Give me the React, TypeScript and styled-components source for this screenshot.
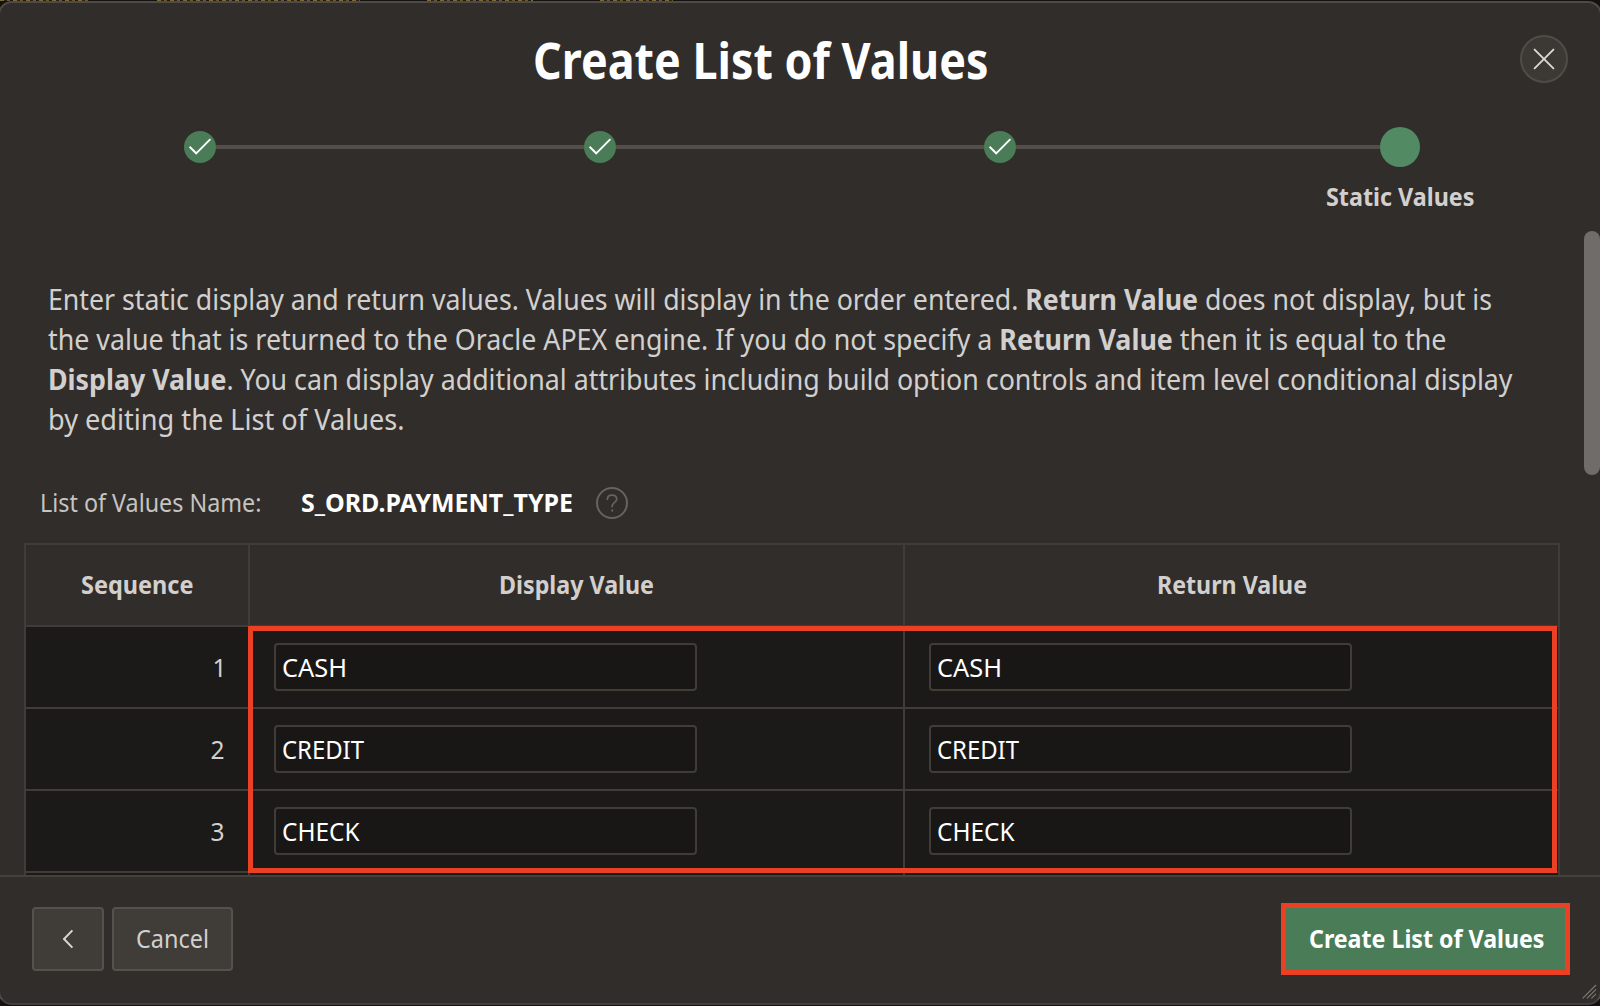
import React, { ReactNode, useLayoutEffect, useRef, useState } from 'react';
import styled, { createGlobalStyle } from 'styled-components';

const color = {
  backdrop: '#14110f',
  surface: '#312d2a',
  surfaceBorder: '#4e4a47',
  line: '#403c39',
  row: '#1b1a18',
  input: '#191715',
  inputBorder: '#403d37',
  button: '#403c38',
  buttonBorder: '#55514d',
  text: '#d2d0ce',
  bright: '#ffffff',
  green: '#4a7d57',
  greenActive: '#528b63',
  red: '#ec4025',
};

const GlobalStyle = createGlobalStyle`
  *, *::before, *::after { box-sizing: border-box; }
  body {
    margin: 0;
    overflow: hidden;
    background: ${color.backdrop};
    font-family: "Noto Sans", "Open Sans", sans-serif;
    color: ${color.text};
  }
`;

const Screen = styled.div`
  position: relative;
  display: flex;
  width: 1600px;
  height: 1006px;
  padding: 1px 0;
  overflow: hidden;
`;

/* Lower edge of the page headings that peek out above the dialog */
const Peek = styled.div`
  position: absolute;
  top: 0;
  left: 0;
  display: flex;
  height: 1px;
`;

const PeekWord = styled.i<{ $gap: number; $width: number }>`
  width: ${p => p.$width}px;
  margin-left: ${p => p.$gap}px;
  background: repeating-linear-gradient(90deg, #7d6a33 0 4px, #2a2216 4px 7px, #6b5a2c 7px 10px, #1c1712 10px 13px);
`;

const Dialog = styled.section`
  display: flex;
  flex-direction: column;
  flex: none;
  width: 1604px;
  height: 1004px;
  margin-left: -2px;
  border: 2px solid ${color.surfaceBorder};
  border-bottom-color: #423e3b;
  border-radius: 14px;
  background: ${color.surface};
  overflow: hidden;
`;

const Header = styled.header`
  display: flex;
  align-items: flex-start;
  justify-content: space-between;
  flex: none;
  height: 120px;
  padding: 26px 32px 0 532.5px;
`;

const Title = styled.h1`
  margin: 1px 0 0;
  font-size: 50px;
  font-weight: 700;
  line-height: 60px;
  color: ${color.bright};
`;

const CloseButton = styled.button`
  display: grid;
  place-items: center;
  width: 48px;
  height: 48px;
  margin-top: 6px;
  padding: 0;
  border: 2px solid #504c48;
  border-radius: 50%;
  background: #3c3834;
`;

const Wizard = styled.ol`
  display: flex;
  align-items: flex-start;
  flex: none;
  height: 108px;
  margin: 0;
  padding: 4px 100px 0 184px;
  list-style: none;
`;

const Step = styled.li`
  display: flex;
  align-items: center;
  flex: none;
  height: 40px;
`;

const StepDot = styled.span`
  display: block;
  width: 32px;
  height: 32px;
  border-radius: 50%;
  background: ${color.green};

  svg { display: block; }
`;

const StepLine = styled.span<{ $width: number }>`
  width: ${p => p.$width}px;
  height: 4px;
  background: #524e4a;
`;

const CurrentStep = styled.li`
  display: flex;
  flex-direction: column;
  align-items: center;
  flex: none;
  width: 150px;
  margin-left: -55px;
`;

const CurrentDot = styled.span`
  width: 40px;
  height: 40px;
  border-radius: 50%;
  background: ${color.greenActive};
`;

const StepLabel = styled.span`
  margin-top: 13px;
  font-size: 25px;
  font-weight: 700;
  line-height: 32px;
`;

const Body = styled.main`
  display: flex;
  flex: none;
  height: 644px;
  justify-content: space-between;
  overflow: hidden;
`;

const Content = styled.div`
  width: 1560px;
  padding: 48px 0 0 24px;
`;

const Intro = styled.p`
  margin: 0;
  padding-left: 23.5px;
  font-size: 28.6px;
  line-height: 40px;

  strong { font-weight: 700; }
`;

const ScrollThumb = styled.div`
  width: 16px;
  height: 244px;
  border-radius: 8px;
  background: #706c69;
`;

const Field = styled.div`
  display: flex;
  align-items: center;
  height: 32px;
  margin: 48px 0 24px;
  padding-left: 16px;
  font-size: 25px;
  line-height: 32px;
`;

const FieldLabel = styled.span`
  width: 261px;
  margin-top: -2px;
  color: #c6c4c1;
`;

const FieldValue = styled.strong`
  width: 295px;
  margin-top: -2px;
  font-weight: 700;
  color: ${color.bright};
`;

const HelpIcon = styled.span`
  display: grid;
  place-items: center;
  width: 32px;
  height: 32px;
  border: 2px solid #67635f;
  border-radius: 50%;
`;

const Table = styled.div`
  display: grid;
  grid-template-columns: 222px 653px 653px;
  gap: 2px;
  width: 1536px;
  border: 2px solid ${color.line};
  background: ${color.line};
`;

const HeadCell = styled.div`
  display: flex;
  align-items: center;
  justify-content: center;
  height: 80px;
  padding-bottom: 2px;
  background: ${color.surface};
  font-size: 25px;
  font-weight: 700;
  line-height: 32px;
`;

const SequenceCell = styled.div<{ $inset: number }>`
  display: flex;
  align-items: center;
  justify-content: flex-end;
  height: 80px;
  padding-right: ${p => p.$inset}px;
  background: ${color.row};
  font-size: 24.5px;
`;

const ValueCell = styled.div`
  height: 80px;
  padding: 16px 24px;
  background: ${color.row};
`;

const ValueBox = styled.div`
  display: flex;
  align-items: center;
  width: 423px;
  height: 48px;
  padding: 2px 6px 0 5.5px;
  border: 2px solid ${color.inputBorder};
  border-radius: 4px;
  background: ${color.input};
  color: ${color.bright};
  font-size: 24.5px;
  line-height: 34px;
`;

const Footer = styled.footer`
  display: flex;
  align-items: flex-start;
  gap: 8px;
  flex: 1;
  padding: 30px 30px 0 32px;
  border-top: 2px solid #44403c;
`;

const Button = styled.button<{ $width: number }>`
  display: flex;
  align-items: center;
  justify-content: center;
  width: ${p => p.$width}px;
  height: 64px;
  padding: 0 1px 0 0;
  border: 2px solid ${color.buttonBorder};
  border-radius: 4px;
  background: ${color.button};
  color: ${color.text};
  font: 400 24.5px/32px "Noto Sans", sans-serif;
`;

const PrimaryButton = styled.button`
  display: flex;
  align-items: center;
  justify-content: center;
  width: 289px;
  height: 72px;
  margin: -4px 0 0 auto;
  padding: 0 0 2px 2px;
  border: 5px solid ${color.red};
  background: ${color.green};
  color: ${color.bright};
  font: 700 25px/32px "Noto Sans", sans-serif;
`;

const Highlight = styled.div`
  position: absolute;
  top: 626px;
  left: 248px;
  width: 1309px;
  height: 247px;
  border: 5px solid ${color.red};
  pointer-events: none;
`;

const Grip = styled.svg`
  position: absolute;
  top: 984px;
  left: 1582px;
`;

const FitBox = styled.span`
  display: block;
  text-align: left;
  white-space: nowrap;
`;

const FitInner = styled.span`
  display: inline-block;
  transform-origin: 0 50%;
`;

/* A line of text condensed or widened to an exact width */
const Fit = ({ width, children }: { width: number; children: ReactNode }) => {
  const ref = useRef<HTMLSpanElement>(null);
  const [scale, setScale] = useState(1);
  useLayoutEffect(() => {
    if (ref.current) {
      setScale(width / parseFloat(getComputedStyle(ref.current).width));
    }
  }, [width]);
  return (
    <FitBox style={{ width }}>
      <FitInner ref={ref} style={{ transform: `scaleX(${scale})` }}>{children}</FitInner>
    </FitBox>
  );
};

const Check = () => (
  <svg width="32" height="32" viewBox="0 0 32 32" fill="none" stroke="#fff" strokeWidth="1.9">
    <path d="M5.6 15.8 12.2 22.3 26.4 8.2" />
  </svg>
);

const rows = [
  { value: 'CASH', width: 65, inset: 21.5 },
  { value: 'CREDIT', width: 82, inset: 23.5 },
  { value: 'CHECK', width: 77.5, inset: 23.5 },
];

const peeks = [
  { gap: 0, width: 88 },
  { gap: 69, width: 203 },
  { gap: 67, width: 106 },
  { gap: 67, width: 73 },
];

export default function App() {
  return (
    <Screen>
      <GlobalStyle />
      <Peek>
        {peeks.map((p, i) => <PeekWord key={i} $gap={p.gap} $width={p.width} />)}
      </Peek>
      <Dialog>
        <Header>
          <Title><Fit width={455.5}>Create List of Values</Fit></Title>
          <CloseButton aria-label="Close">
            <svg width="24" height="24" viewBox="0 0 24 24" fill="none" stroke="#d9d7d5" strokeWidth="1.9" strokeLinecap="round">
              <path d="M2.6 2.6 21.4 21.4M21.4 2.6 2.6 21.4" />
            </svg>
          </CloseButton>
        </Header>
        <Wizard>
          {[368, 368, 364].map((w, i) => (
            <Step key={i}>
              <StepDot><Check /></StepDot>
              <StepLine $width={w} />
            </Step>
          ))}
          <CurrentStep>
            <CurrentDot />
            <StepLabel><Fit width={148.5}>Static Values</Fit></StepLabel>
          </CurrentStep>
        </Wizard>
        <Body>
          <Content>
            <Intro>
              <Fit width={1444}>
                Enter static display and return values. Values will display in the order entered. <strong>Return Value</strong> does not display, but is
              </Fit>
              <Fit width={1398.5}>
                the value that is returned to the Oracle APEX engine. If you do not specify a <strong>Return Value</strong> then it is equal to the
              </Fit>
              <Fit width={1464.5}>
                <strong>Display Value</strong>. You can display additional attributes including build option controls and item level conditional display
              </Fit>
              <Fit width={356.5}>by editing the List of Values.</Fit>
            </Intro>
            <Field>
              <FieldLabel><Fit width={221.5}>List of Values Name:</Fit></FieldLabel>
              <FieldValue><Fit width={272}>S_ORD.PAYMENT_TYPE</Fit></FieldValue>
              <HelpIcon>
                <svg width="14" height="20" viewBox="0 0 14 20" fill="none" stroke="#67635f" strokeWidth="1.8" strokeLinecap="round">
                  <path d="M2.4 6.2C2.4 3.6 4.3 2.2 7 2.2s4.7 1.6 4.7 4.1c0 3.2-4.5 3.4-4.5 6.4v.7" />
                  <path d="M7.2 17.4v.3" strokeWidth="2.2" />
                </svg>
              </HelpIcon>
            </Field>
            <Table>
              <HeadCell><Fit width={112.5}>Sequence</Fit></HeadCell>
              <HeadCell><Fit width={155}>Display Value</Fit></HeadCell>
              <HeadCell><Fit width={150}>Return Value</Fit></HeadCell>
              {[...rows, null].map((row, i) => (
                <React.Fragment key={i}>
                  <SequenceCell $inset={row ? row.inset : 0}>{row && i + 1}</SequenceCell>
                  <ValueCell>{row && <ValueBox><Fit width={row.width}>{row.value}</Fit></ValueBox>}</ValueCell>
                  <ValueCell>{row && <ValueBox><Fit width={row.width}>{row.value}</Fit></ValueBox>}</ValueCell>
                </React.Fragment>
              ))}
            </Table>
          </Content>
          <ScrollThumb />
        </Body>
        <Footer>
          <Button $width={72} aria-label="Previous">
            <svg width="12" height="22" viewBox="0 0 12 22" fill="none" stroke="#d9d7d5" strokeWidth="2">
              <path d="M10.4 2.4 2 11l8.4 8.6" />
            </svg>
          </Button>
          <Button $width={121}><Fit width={73}>Cancel</Fit></Button>
          <PrimaryButton><Fit width={235.5}>Create List of Values</Fit></PrimaryButton>
        </Footer>
      </Dialog>
      <Highlight />
      <Grip width="15" height="15" viewBox="0 0 15 15" fill="none" stroke="#7c7874" strokeWidth="1.2">
        <path d="M.6 14.4 14 1M5 14.4 14 5.4M9.4 14.4 14 9.8" />
      </Grip>
    </Screen>
  );
}
